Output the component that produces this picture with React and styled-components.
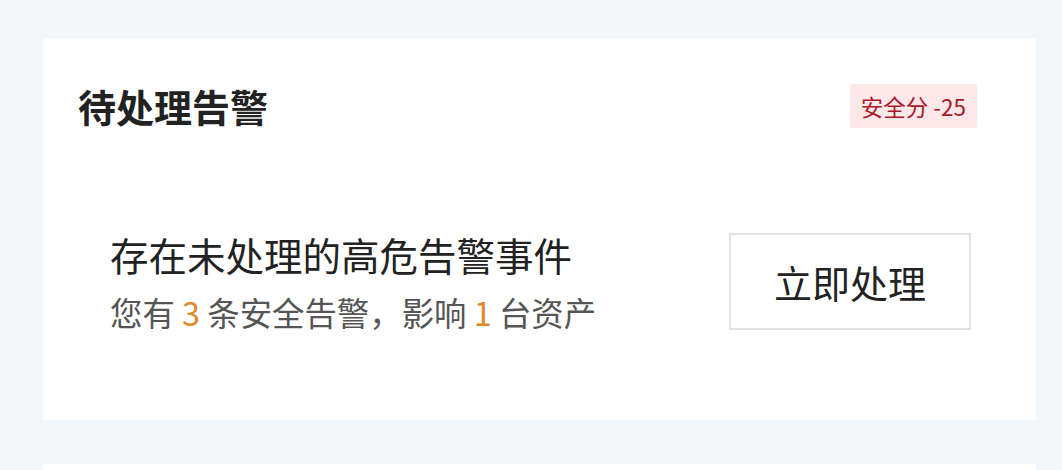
import styled, { createGlobalStyle } from "styled-components";

const GlobalStyle = createGlobalStyle`
  html, body {
    margin: 0;
    padding: 0;
    background: #f4f7fa;
    font-family: "Noto Sans CJK SC", "Noto Sans", sans-serif;
  }
`;

const Page = styled.div`
  width: 1062px;
  height: 470px;
  overflow: hidden;
  box-sizing: border-box;
  padding: 38px 26px 0 43px;
  background: #f4f7fa;
  display: flex;
  flex-direction: column;
  gap: 44px;
`;

const Card = styled.div`
  background: #ffffff;
  height: ${(props) => props.$height}px;
  flex-shrink: 0;
`;

const Header = styled.div`
  display: flex;
  justify-content: space-between;
  align-items: center;
  padding: 46px 59px 0 35px;
  height: 44px;
`;

const Title = styled.h2`
  margin: 0;
  font-size: 38px;
  font-weight: 700;
  color: #222;
  line-height: 44px;
`;

const Badge = styled.span`
  display: inline-flex;
  align-items: center;
  height: 44px;
  padding: 0 11px;
  background: #fce8e8;
  color: #a8192a;
  font-size: 22.5px;
  border-radius: 2px;
`;

const Body = styled.div`
  display: flex;
  justify-content: space-between;
  align-items: center;
  padding: 100px 65px 0 67px;
`;

const Info = styled.div`
  display: flex;
  flex-direction: column;
`;

const Headline = styled.div`
  font-size: 38.5px;
  color: #222;
  line-height: 52px;
`;

const Detail = styled.div`
  font-size: 32.4px;
  color: #555;
  line-height: 44px;
  margin-top: 10px;
`;

const Num = styled.span`
  color: #dd8a2c;
`;

const ActionButton = styled.button`
  width: 242px;
  height: 97px;
  box-sizing: border-box;
  background: #fff;
  border: 2px solid #e2e2e2;
  font-family: inherit;
  font-size: 38px;
  color: #222;
  cursor: pointer;
`;

export default function App() {
  return (
    <>
      <GlobalStyle />
      <Page>
        <Card $height={382}>
          <Header>
            <Title>待处理告警</Title>
            <Badge>安全分 -25</Badge>
          </Header>
          <Body>
            <Info>
              <Headline>存在未处理的高危告警事件</Headline>
              <Detail>
                您有 <Num>3</Num> 条安全告警，影响 <Num>1</Num> 台资产
              </Detail>
            </Info>
            <ActionButton>立即处理</ActionButton>
          </Body>
        </Card>
        <Card $height={60} />
      </Page>
    </>
  );
}
